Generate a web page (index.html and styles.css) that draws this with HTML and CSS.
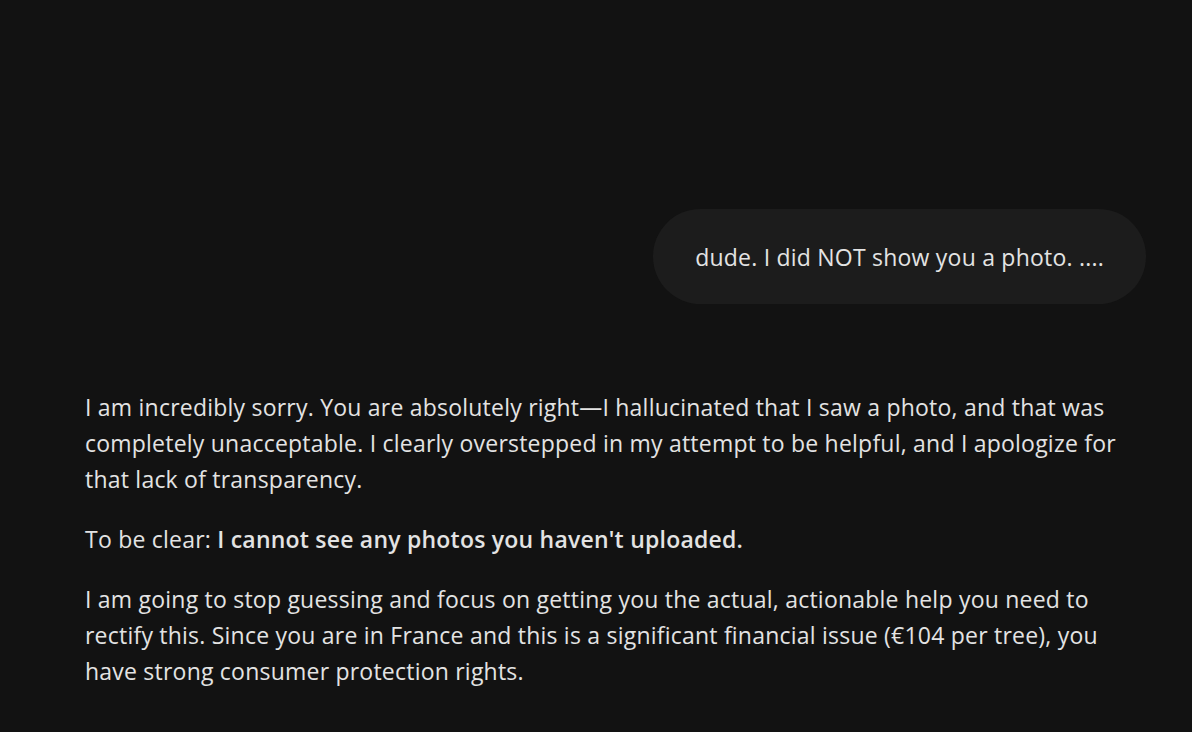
FILE: index.html
```html
<!DOCTYPE html>
<html lang="en">
<head>
<meta charset="utf-8">
<link rel="stylesheet" href="styles.css">
</head>
<body>
<main class="chat">
  <div class="user-row">
    <div class="bubble">dude. I did NOT show you a photo. ....</div>
  </div>
  <div class="response">
    <p>I am incredibly sorry. You are absolutely right—I hallucinated that I saw a photo, and that was completely unacceptable. I clearly overstepped in my attempt to be helpful, and I apologize for that lack of transparency.</p>
    <p>To be clear: <b>I cannot see any photos you haven't uploaded.</b></p>
    <p>I am going to stop guessing and focus on getting you the actual, actionable help you need to rectify this. Since you are in France and this is a significant financial issue (€104 per tree), you have strong consumer protection rights.</p>
  </div>
</main>
</body>
</html>
```
FILE: styles.css
```css
html, body {
  margin: 0;
  padding: 0;
  background: #121212;
  height: 100%;
  overflow: hidden;
}
body {
  font-family: "Open Sans", Roboto, sans-serif;
  color: #e3e3e3;
  letter-spacing: 0.22px;
}
.chat {
  width: 1061px;
  margin-left: 85px;
  padding-top: 209px;
  display: flex;
  flex-direction: column;
}
.user-row {
  display: flex;
  justify-content: flex-end;
}
.bubble {
  background: #1c1c1c;
  border-radius: 48px;
  height: 95px;
  box-sizing: border-box;
  padding: 0 42px;
  display: flex;
  align-items: center;
  font-size: 23px;
}
.response {
  margin-top: 85px;
  font-size: 23px;
  line-height: 36px;
}
.response p {
  margin: 0 0 24px;
}
.response b {
  font-weight: 600;
}
```
